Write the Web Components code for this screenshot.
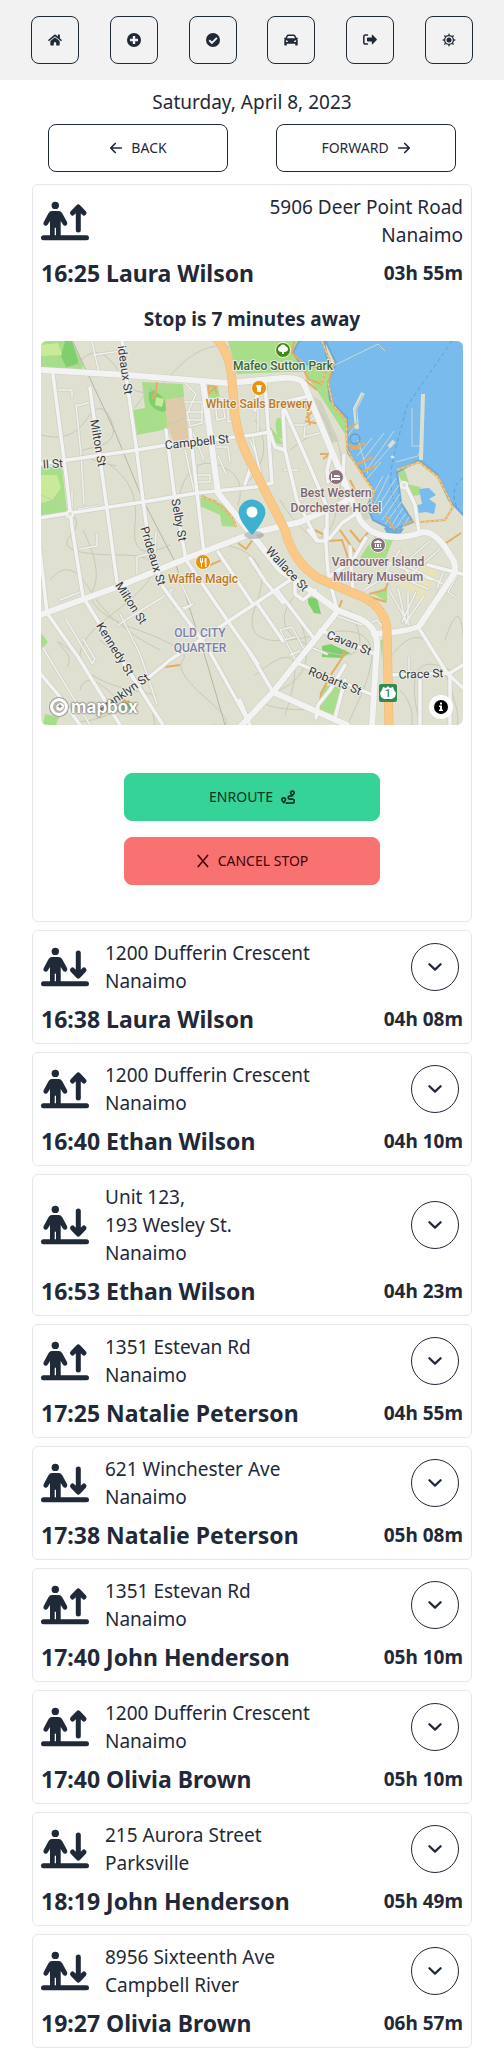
<!DOCTYPE html>
<html lang="en">
<head>
<meta charset="utf-8">
<meta name="viewport" content="width=device-width, initial-scale=1">
<title>Driver schedule</title>
<style>
  body { margin: 0; background: #fff; color: #1f2937; font: 19px/28px "Noto Sans", "Open Sans", sans-serif; }
</style>
</head>
<body>
<schedule-page>
  <app-nav slot="nav"></app-nav>
  <day-switcher slot="day">Saturday, April 8, 2023</day-switcher>
  <stop-card kind="up" time="16:25" name="Laura Wilson" eta="03h 55m" expanded>
    <span slot="address">5906 Deer Point Road<br>Nanaimo</span>
    <stop-detail>Stop is 7 minutes away</stop-detail>
  </stop-card>
  <stop-card kind="down" time="16:38" name="Laura Wilson" eta="04h 08m"><span slot="address">1200 Dufferin Crescent<br>Nanaimo</span></stop-card>
  <stop-card kind="up" time="16:40" name="Ethan Wilson" eta="04h 10m"><span slot="address">1200 Dufferin Crescent<br>Nanaimo</span></stop-card>
  <stop-card kind="down" time="16:53" name="Ethan Wilson" eta="04h 23m"><span slot="address">Unit 123,<br>193 Wesley St.<br>Nanaimo</span></stop-card>
  <stop-card kind="up" time="17:25" name="Natalie Peterson" eta="04h 55m"><span slot="address">1351 Estevan Rd<br>Nanaimo</span></stop-card>
  <stop-card kind="down" time="17:38" name="Natalie Peterson" eta="05h 08m"><span slot="address">621 Winchester Ave<br>Nanaimo</span></stop-card>
  <stop-card kind="up" time="17:40" name="John Henderson" eta="05h 10m"><span slot="address">1351 Estevan Rd<br>Nanaimo</span></stop-card>
  <stop-card kind="up" time="17:40" name="Olivia Brown" eta="05h 10m"><span slot="address">1200 Dufferin Crescent<br>Nanaimo</span></stop-card>
  <stop-card kind="down" time="18:19" name="John Henderson" eta="05h 49m"><span slot="address">215 Aurora Street<br>Parksville</span></stop-card>
  <stop-card kind="down" time="19:27" name="Olivia Brown" eta="06h 57m"><span slot="address">8956 Sixteenth Ave<br>Campbell River</span></stop-card>
</schedule-page>

<script>
const ICONS = {
  home: '<svg viewBox="0 0 576 512" width="14" height="14"><path fill="currentColor" d="M280.37 148.26L96 300.11V464a16 16 0 0 0 16 16l112.06-.29a16 16 0 0 0 15.92-16V368a16 16 0 0 1 16-16h64a16 16 0 0 1 16 16v95.64a16 16 0 0 0 16 16.05L464 480a16 16 0 0 0 16-16V300L295.67 148.26a12.19 12.19 0 0 0-15.3 0zM571.6 251.47L488 182.56V44.05a12 12 0 0 0-12-12h-56a12 12 0 0 0-12 12v72.61L318.47 43a48 48 0 0 0-61 0L4.34 251.47a12 12 0 0 0-1.6 16.9l25.5 31A12 12 0 0 0 45.15 301l235.22-193.74a12.19 12.19 0 0 1 15.3 0L530.9 301a12 12 0 0 0 16.9-1.6l25.5-31a12 12 0 0 0-1.7-16.93z"/></svg>',
  plus: '<svg viewBox="0 0 14 14" width="14" height="14"><path fill="currentColor" fill-rule="evenodd" d="M7 0a7 7 0 1 1 0 14A7 7 0 0 1 7 0zM5.8 3v2.8H3v2.4h2.800V11h2.400V8.200H11V5.800H8.200V3z"/></svg>',
  check: '<svg viewBox="0 0 14 14" width="14" height="14"><circle cx="7" cy="7" r="7" fill="currentColor"/><path fill="none" stroke="#f2f2f2" stroke-width="1.900" d="M3.200 7.200l2.700 2.600 5-5"/></svg>',
  car: '<svg viewBox="0 0 14 14" width="14" height="14"><path fill="currentColor" fill-rule="evenodd" d="M4.300 1.600h5.400q1.300 0 1.800 1.200l.9 2h1.100q.5 0 .4.500l-.2.700q-.1.300-.5.300.5.600.5 1.400v4q0 .9-.9.900h-.7q-.9 0-.9-.9v-.9H2.800v.9q0 .9-.9.900h-.7q-.9 0-.9-.9v-4q0-.8.500-1.400-.4 0-.5-.3L.1 5.300q-.1-.5.4-.5h1.100l.9-2q.5-1.200 1.800-1.200zM4.500 3q-.6 0-.8.600L3 5.300h8l-.7-1.700q-.2-.6-.8-.6zM2.700 7.200a.9.900 0 1 0 0 1.800h1.200q.4-.1.100-.6-.5-.8-1.300-1.200zm8.600 0q-.8.400-1.300 1.200-.3.500.1.600h1.200a.9.900 0 1 0 0-1.800z"/></svg>',
  exit: '<svg viewBox="0 0 14 14" width="14" height="14"><path fill="none" stroke="currentColor" stroke-width="1.500" stroke-linecap="round" d="M4.500 2H2.600Q.8 2 .8 3.800v5.400Q.8 11 2.600 11h1.900"/><path fill="currentColor" d="M4.800 4.500h4V2q0-.8.700-.3l4.200 4.400q.4.400 0 .8L9.500 11.300q-.7.500-.7-.3V8.500h-4q-.8 0-.8-.8V5.300q0-.8.800-.8z"/></svg>',
  sun: '<svg viewBox="0 0 14 14" width="14" height="14"><g fill="currentColor"><circle cx="7" cy="7" r="2.500"/><path d="M7 0l1 2.200H6zM7 14l1-2.200H6zM0 7l2.200 1V6zM14 7l-2.200 1V6zM2 2l2.400.9-1.500 1.500zM12 2l-2.400.9 1.500 1.500zM2 12l2.400-.9-1.500-1.500zM12 12l-2.400-.9 1.500-1.500z"/></g><circle cx="7" cy="7" r="4.400" fill="none" stroke="currentColor" stroke-width="1.300"/></svg>',
  left: '<svg viewBox="0 0 14 14" width="14" height="14"><path fill="none" stroke="currentColor" stroke-width="1.700" stroke-linecap="round" stroke-linejoin="round" d="M12.200 7H1.800M6.200 2.500L1.700 7l4.500 4.500"/></svg>',
  right: '<svg viewBox="0 0 14 14" width="14" height="14"><path fill="none" stroke="currentColor" stroke-width="1.700" stroke-linecap="round" stroke-linejoin="round" d="M1.800 7h10.400M7.800 2.500L12.300 7l-4.500 4.500"/></svg>',
  route: '<svg viewBox="0 0 14 14" width="14" height="14"><g fill="none" stroke="currentColor" stroke-width="1.700" stroke-linecap="round" stroke-linejoin="round"><path d="M11.300 5.600Q9.500 3.700 9.500 2.600a1.900 1.900 0 0 1 3.700 0q0 1.100-1.900 3zM2.700 12.600Q.9 10.800.9 9.600a1.800 1.800 0 0 1 3.600 0q0 1.200-1.800 3z"/><path d="M10.700 6H8.800a1.600 1.600 0 0 0 0 3.200h2.600a1.900 1.900 0 0 1 0 3.900H5.300"/></g></svg>',
  cross: '<svg viewBox="0 0 14 14" width="14" height="14"><path fill="none" stroke="currentColor" stroke-width="1.600" stroke-linecap="round" d="M2.200 1.400l9.400 11.200M11.600 1.400L2.200 12.600"/></svg>',
  chevron: '<svg viewBox="0 0 14 14" width="14" height="14"><path fill="none" stroke="currentColor" stroke-width="2.200" stroke-linecap="round" stroke-linejoin="round" d="M1.400 4.200L7 9.600l5.600-5.400"/></svg>'
};
const rider = arrow => `<svg viewBox="0 0 48 40" width="48" height="40" aria-hidden="true"><circle cx="14.300" cy="4.400" r="3.700" fill="currentColor"/><path fill="currentColor" d="M11 10h6.600q2.300 0 3.800 2.400l4.600 8.600q1 2.400-.8 3.400-2 .8-3.300-1l-2.200-3.400V35h-4.700v-8.200h-1.300V35H9V20l-2.200 3.400q-1.300 1.800-3.100 1-2-1-.9-3.400l4.500-8.600Q8.700 10 11 10z"/><g fill="none" stroke="currentColor" stroke-width="5" stroke-linecap="round" stroke-linejoin="round"><path d="M2.500 36.700h43"/><path d="${arrow === 'up' ? 'M37.300 29V7M31.500 12L37.300 6l5.700 6' : 'M37.300 6v22M31.500 23l5.800 6 5.700-6'}"/></g></svg>`;

function define(name, render) {
  customElements.define(name, class extends HTMLElement {
    constructor() {
      super();
      this.attachShadow({ mode: 'open' });
    }
    connectedCallback() {
      const t = document.createElement('template');
      t.innerHTML = render(this);
      this.shadowRoot.replaceChildren(t.content.cloneNode(true));
    }
  });
}

define('schedule-page', () => `
  <style>
    :host { display: block; }
    main { display: flex; flex-direction: column; gap: 8px; padding: 12px 32px 4px; }
  </style>
  <slot name="nav"></slot>
  <slot name="day"></slot>
  <main><slot></slot></main>`);

define('app-nav', () => `
  <style>
    :host { display: block; background: #f2f2f2; }
    nav { display: flex; justify-content: space-evenly; padding: 16px 0; }
  </style>
  <nav aria-label="Main">
    ${[['home', 'Home'], ['plus', 'Add'], ['check', 'Completed'], ['car', 'Vehicle'], ['exit', 'Sign out'], ['sun', 'Theme']]
      .map(([icon, label]) => `<ui-button icon="${icon}" label="${label}" variant="square"></ui-button>`).join('')}
  </nav>`);

define('ui-button', el => {
  const icon = el.getAttribute('icon'), label = el.getAttribute('label');
  const text = el.textContent.trim() ? '<span><slot></slot></span>' : '';
  const order = el.hasAttribute('trailing') ? text + ICONS[icon] : ICONS[icon] + text;
  return `
  <style>
    :host { display: block; }
    :host([variant="square"]), :host([variant="round"]) { width: 48px; }
    button { box-sizing: border-box; width: 100%; height: 48px; padding: 0; display: flex; align-items: center; justify-content: center; gap: 8px;
      border: 1px solid #1f2937; border-radius: 8px; background: transparent; color: #1f2937; font: 14px/20px "Noto Sans", "Open Sans", sans-serif; cursor: pointer; }
    :host([variant="round"]) button { border-radius: 50%; }
    :host([variant="success"]) button { border-color: #36d399; background: #36d399; color: #003320; }
    :host([variant="error"]) button { border-color: #f87272; background: #f87272; color: #470000; }
    svg { flex: none; }
  </style>
  <button type="button" ${label ? `aria-label="${label}"` : ''}>${order}</button>`;
});

define('day-switcher', () => `
  <style>
    :host { display: block; padding-top: 8px; text-align: center; }
    h1 { margin: 0; font: inherit; }
    div { display: flex; justify-content: space-evenly; padding-top: 8px; }
    ui-button { flex: 0 1 180px; }
  </style>
  <h1><slot></slot></h1>
  <div><ui-button icon="left">BACK</ui-button><ui-button icon="right" trailing>FORWARD</ui-button></div>`);

define('stop-card', el => {
  const a = n => el.getAttribute(n), open = el.hasAttribute('expanded');
  return `
  <style>
    :host { display: block; padding: 8px; border: 1px solid #e5e7eb; border-radius: 6px; }
    .top { display: flex; align-items: center; gap: 16px; }
    .top svg { flex: none; }
    address { flex: 1; font-style: normal; }
    :host([expanded]) address { text-align: right; }
    ui-button { margin-right: 4px; }
    .rider { display: flex; align-items: center; justify-content: space-between; padding-top: 8px; font-weight: 700; }
    h2 { margin: 0; font-size: 23px; line-height: 32px; }
  </style>
  <div class="top">${rider(a('kind'))}<address><slot name="address"></slot></address>${open ? '' : '<ui-button variant="round" icon="chevron" label="Show stop"></ui-button>'}</div>
  <div class="rider"><h2>${a('time')} ${a('name')}</h2><span>${a('eta')}</span></div>
  <slot></slot>`;
});

define('stop-detail', () => `
  <style>
    :host { display: block; padding: 16px 0 28px; }
    h3 { margin: 0 0 8px; text-align: center; font-size: 19px; line-height: 28px; font-weight: 700; }
    .actions { display: flex; flex-direction: column; align-items: center; gap: 16px; padding-top: 48px; }
    ui-button { width: 256px; max-width: 100%; }
  </style>
  <h3><slot></slot></h3>
  <street-map></street-map>
  <div class="actions"><ui-button variant="success" icon="route" trailing>ENROUTE</ui-button><ui-button variant="error" icon="cross">CANCEL STOP</ui-button></div>`);

const STREETS = [
  'M53 375L67 483 72 527 83 597 130 673 163 725', 'M40 550L47 613 78 657 120 725', 'M40 673L60 697 80 725',
  'M90 388L96 432 103 480 117 582', 'M122 340L127 383 137 453 143 500 149 545 163 587 207 647 242 710 250 725',
  'M166 430L175 500 186 560 227 620 258 664', 'M40 464L67 460 137 450 167 445 253 435 270 432', 'M40 518L70 513 143 502 197 493 255 487 272 483 265 383',
  'M125 694L137 687 170 660 253 605 293 578', 'M190 429L197 493 204 553', 'M218 552L252 603', 'M250 558L265 581 283 603', 'M257 603L283 641', 'M277 590L313 637', 'M295 582V594L303 600 315 590',
  'M250 653L273 692', 'M320 630L377 655', 'M297 663L373 695', 'M345 665L330 690 318 705 316 718', 'M345 680L335 718', 'M388 675L450 673 463 665', 'M420 630L447 673 463 688',
  'M450 673V725', 'M420 676V725', 'M325 530L328 573 337 610', 'M270 433L275 447 285 450', 'M283 412L285 450 297 500 317 540', 'M283 410L288 401 305 397', 'M285 410L307 460 327 507 327 540',
  'M332 450L327 470 328 482', 'M330 538L342 523 357 513', 'M247 455L250 470 245 484', 'M308 530L317 541 326 541', 'M343 485L344 455', 'M330 576L353 560 366 538', 'M350 547L353 590', 'M428 565L462 574', 'M406 486L415 505 419 532',
  'M258 390L255 410M250 725L240 700'
];
const LANES = [
  'M58 390h14v8M76 406l15-4M76 404l5 50 3 50M93 355l28-4M99 372L95 355 92 341M98 506l-20 3M80 549l17-3v-12M72 530v-40M60 600l20-8',
  'M43 648L90 725M92 663l-12-20-14-24M92 664l3-5-12-20M117 626l10-7 36-22 10-8M120 614l20 40 17 50M137 574v-17l18-5 1-20M170 590l6 20 15-5-10-22-10-3M173 602l7 10 13-8',
  'M184 382l12 12-8 18h15M185 402h17M187 412l3 14 12-3v-20M192 430l12 30M187 420h15M185 450l10 45M196 482h14v-7h-14v-10M215 400l7-2 3 20-8 2zM228 405l4 0 2 15-6 2zM216 447h12l2 15M218 456l8 18',
  'M250 440l6 15 4 20M252 435l9 40M305 427l-1 10 16-4M288 425h17l10-8M258 390v42M298 470h-14M303 500l-6-2M330 452l10 30',
  'M280 630l12-3 13 24-10 8zM283 640l12-3M290 655l10-4M310 647l17 7M333 615l15 5 14 5M365 625l12-5 8 10-5 10M382 560l50 20M388 572l40 17M395 560l50 25M400 550l-20 30-16 10M389 590l20 35M398 588l8 36M408 590v32M416 592l-14 30M424 596l-18 26M440 590l-14 24M445 568l-8 20M409 657v15',
  'M393 457l-1 0M455 597l-7-5 10-18M430 541l-28 24 8 10 30-26'
];
const CONTOURS = [
  'M41 362q20 18 40-2t40 15 50 0 60-28M41 435q30 8 45-15t25 0-20 28 25 18M110 465q30 20 25 60t35 20M83 530q20 40 10 60t45 40 45 30 25 40 5 25M135 408q25-40 45-10t-30 25M178 500q10-45 40-35t20 40',
  'M41 495q50 20 30 40t50 20-10 60 45 80M50 580q20-25 40 10t70 60M70 650q-20-15-8-3t5 20M80 690q5-20 30 2t-30 30M100 640q50 40 55 85M226 545q50 10 30 60t60 30 45 60-20 28M255 675q60-50 30 40M295 610q30 60-15 80t40 20',
  'M290 450q60-50 50 40t-60 10M310 400q30 30 20 60M255 420q20 30-5 60M300 590q-40 40 20 60t30-40M392 655q30-40 50 10t15 60M420 725q-20-80 30-55M400 690q15 15 12 35M445 640q15-45 18-5'
];
const LABELS = [
  ['ideaux St', 125, 370, 82], ['Milton St', 98, 443, 80], ['ll St', 53, 464, -4], ['Campbell St', 197, 442, -6], ['Selby St', 179, 520, 80], ['Prideaux St', 153, 556, 73],
  ['Milton St', 131, 603, 57], ['Kennedy St', 115, 649, 58], ['Franklyn St', 124, 693, -35], ['Wallace St', 287, 569, 47], ['Cavan St', 349, 643, 22], ['Robarts St', 335, 681, 22], ['Crace St', 421, 674, -2],
  ['Mafeo Sutton Park', 283, 366, 0, '#38682b'], ['White Sails Brewery', 259, 404, 0, '#bd7a1d'], ['Waffle Magic', 203, 579, 0, '#bd7a1d'],
  ['Best Western', 336, 493, 0, '#7d6470'], ['Dorchester Hotel', 336, 508, 0, '#7d6470'], ['Vancouver Island', 378, 562, 0, '#7d6470'], ['Military Museum', 378, 577, 0, '#7d6470'],
  ['OLD CITY', 200, 633, 0, '#7a80aa'], ['QUARTER', 200, 648, 0, '#7a80aa']
];
const ROADS = {
  top: 'M40 370L127 375 228 383 250 381 283 378Q300 377 304 384L330 447 346 485 360 520Q368 531 378 534 397 541 423 532 437 532 450 555 457 563 454 574L420 625Q418 629 388 633L374 634',
  wallace: 'M203 383L211 440 218 493 240 520 253 536 280 570 310 590 337 610 360 619Q377 627 377 645L372 725',
  diagonal: 'M40 615L117 587 190 557 253 533 300 522 343 503 350 498',
  south: 'M337 612L273 692 240 727',
  lower: 'M273 692L347 725'
};
const HIGHWAY = 'M216 338Q227 350 231 370L235 415Q238 440 253 467L285 530Q293 562 318 578L353 593Q385 604 387 630L389 728';
const paths = (list, attrs) => `<g fill="none" stroke-linejoin="round" stroke-linecap="round" ${attrs}>${list.map(d => `<path d="${d}"/>`).join('')}</g>`;

define('street-map', () => `
  <style>
    :host { display: block; position: relative; overflow: hidden; border-radius: 6px; }
    .map { display: block; width: 100%; height: 384px; }
    text { font-family: Roboto, "Liberation Sans", sans-serif; font-size: 12px; font-weight: 500; text-anchor: middle; dominant-baseline: central; paint-order: stroke; stroke: #eeeee6; stroke-width: 2px; stroke-linejoin: round; }
    text.street { font-weight: 400; }
    .logo { position: absolute; left: 8px; bottom: 6px; display: flex; align-items: center; gap: 2px; height: 24px; color: #fff; text-decoration: none;
      font: 700 17px/24px Inter, sans-serif; text-shadow: 0 0 2px #777, 0 0 2px #777, 0 0 2px #888; }
    button { position: absolute; right: 10px; bottom: 6px; width: 24px; height: 24px; padding: 0; border: 0; border-radius: 50%; background: #fff; }
    button svg, .logo svg { display: block; }
    button svg { margin: auto; }
  </style>
  <svg class="map" viewBox="41 341 422 384" preserveAspectRatio="xMidYMid slice" role="img" aria-label="Map of Nanaimo">
    <path fill="#dfe0d0" d="M0 300h504v460H0z"/>
    <g fill="#a8de89">
      <path d="M41 341h31l11 24-1 7-41-5zM142 382l41 2 1 13-19 3 3 29-31 6-4-25 12-2zM41 467h21l5 45-26 3zM201 494l26 13 10 20-15-1-2-11-20-9zM205 384l13 3 2 12-14-2z"/>
      <path d="M228 341h72l-6 12 8 9 31 2-5 22 19 33v18l-31-48-12-17h-22l-45 2zM268 424q10 12 17 19v-25h-8q-5 12 7 27-13-1-20-13z"/>
      <path d="M365 550l12-17 16 7-8 20-25-2zM372 593l15-6v15zM324 685l19 3-11 29-15-8zM41 633l7 9-7 8zM45 714l14 3-3 8H43zM380 640h3l-1 20zM397 470l7-2 5 15-8-3zM407 484l13 3 0 8-7 1z"/>
      <path fill="#7fcf6d" d="M65 341h7l7 23-13 3-5-11zM150 388q25 15 14 24-20-4-14-24zM308 597l9 1 4 16-7-1-6-10zM322 646l9-2 19 9-8 5-20-1zM119 705l10-5 2 8-8 3z"/>
    </g>
    <path fill="#c9ea9a" d="M41 345l17-2 4 12-21 1zM41 475l16 0 4 13-9 12-11 3zM156 397l8 2-2 8-7-2z"/>
    <path fill="#dfcba9" d="M165 400l19-3 5 43-16 1-5-13z"/>
    <path fill="#e9e3bd" d="M410 560l25 3 2 10-13 29-27-19z"/>
    <path fill="#d2d2c1" d="M308 393l13 8 18 40-8 2zM345 505l20 2 5 12-12 2z"/>
    <path fill="#79bbec" stroke="#6fa9d4" stroke-width="2" d="M300 340l-7 12 6 10 20 6 9-5-4-23zM325 340l11 23-8 20 2 17 17 18 1 35 14 18 12 20-7 16 6 13 20 10 20-8-12-19-4-31 22-12 18 14 12 26 16 17V340zM385 528q10 6 18 0l-3 5h-12z"/>
    <path fill="#79bbec" d="M419 489l10-1 7 7-7 4 7 5-2 10-8-2-7 1-6-7 9-2z"/>
    <path fill="none" stroke="#5e9edb" stroke-dasharray="4 3" d="M452 341l-45 65-12 45q-8 30-1 50l8 20M463 478q-15 10-5 32"/>
    <g fill="none" stroke="#c9d8d5" stroke-width="1">
      <path d="M333 366l45-22 7 7M412 408v38h8M396 462l22-6 4-9M357 456l15-18M360 464l24-31M365 472l29-41M370 470l22-25M366 480l15-18M370 500l13-24M374 505l15-30M376 510l20-32M379 515l20-30M382 520l18-26M385 524l18-24M390 528l13-20M396 528l10-15M402 529l7-12M358 440l10 34M345 440l14-20"/>
      <path stroke="#dde0d0" stroke-width="4" d="M423 394l-2 66M363 393l-8 16 2 20M389 447l5-6"/><path stroke="#8dbfe2" d="M363 395l-7 14 1 15"/>
      <circle cx="355" cy="439" r="5" stroke="#718fa4"/>
    </g>
    ${paths(CONTOURS, 'stroke="#c8c8b8" stroke-width="1"')}
    <path fill="none" stroke="#b4b5a4" stroke-width="1" d="M72 340L115 432 143 500 175 562 207 663 225 725"/>
    ${paths(LANES, 'stroke="#cecfc3" stroke-width="3"')}
    ${paths(LANES, 'stroke="#f1f1ee" stroke-width="1.500"')}
    <path fill="none" stroke="#e5ad62" stroke-width="2" d="M157 382l-1 10-4 7M207 395l9-8-7-2zM213 385l4 8M201 497l14 4 18 17 3 9M238 543l8 6 8-11M305 400l5 25M306 418l8-8M305 421l15 3M320 454l10 0-7 5M334 362l-6 22M322 341l8 20-9 23-13-5-7-16M294 341l-2 12 10 9M305 380l12 10M328 383l5 22 13 15 1 30 15 24 12 17-5 20M346 430l10-6M348 445l12 4M350 450l15-7M355 465l18-8M362 472l14-6M397 470l22-8 19 15 15 30-8 13-25 2M403 525l10-4M328 541l14-1 6 18M340 530l15 22M315 530l15 8M350 530l10 12 10-12M342 600l-3 8M369 594l16-4 3-7M367 596l19 6M345 650l-3 8-10 15-11 20-2 20M210 565l12-5-3-3M118 712l6-12 8 5M443 545l18-12M180 665l-15 2M350 480l5 10 5 0M385 515l10 15"/>
    <path fill="none" stroke="#f1d7a8" stroke-width="1" stroke-dasharray="3 2" d="M322 341l8 20-9 23M328 383l5 22 13 15 1 30 15 24 12 17-5 20M397 470l22-8 19 15 15 30-8 13-25 2M201 497l14 4 18 17 3 9"/>
    ${paths(STREETS, 'stroke="#cfd0c6" stroke-width="5"')}
    ${paths(Object.values(ROADS), 'stroke="#cfd0c6" stroke-width="7"')}
    ${paths(STREETS, 'stroke="#f3f3f3" stroke-width="3.500"')}
    ${paths(Object.values(ROADS), 'stroke="#f3f3f3" stroke-width="6"')}
    <circle cx="70" cy="514" r="3" fill="#dfe0d0" stroke="#f3f3f3" stroke-width="2"/><circle cx="404" cy="485" r="3" fill="#dfe0d0" stroke="#f3f3f3" stroke-width="2"/>
    <path fill="none" stroke="#eeb877" stroke-width="9" d="${HIGHWAY}"/><path fill="none" stroke="#fac987" stroke-width="8" d="${HIGHWAY}"/>
    <g>${LABELS.map(([t, x, y, r, c]) => `<text x="${x}" y="${y}" fill="${c || '#36383f'}" ${r ? `class="street" transform="rotate(${r} ${x} ${y})"` : ''}>${t}</text>`).join('')}</g>
    <g stroke="#f5f0e8" stroke-width="1">
      <circle cx="283" cy="350" r="7.500" fill="#3f8a10"/><circle cx="259" cy="388" r="7.500" fill="#e8930f"/><circle cx="203" cy="562" r="7.500" fill="#e8930f"/><circle cx="336" cy="477" r="7.500" fill="#8b717e"/><circle cx="378" cy="545" r="7.500" fill="#8b717e"/>
    </g>
    <g fill="#fff">
      <path d="M282 354v-2q-4 0-4-3 0-2 2-2.500 1-2 3-2t3 2q2 .5 2 2.500 0 3-4 3v2zM256 385h6l-1 3v4h-4v-4zM200 558v4l1 1v4h1v-4l1-1v-4h-1v3h-1v-3zM205 558q-1 4 0 5v4h1.500v-9zM331 474h1v4h8v-2l-2-1h-4v2h6v3h-8v1h-1zM374 542l4-2 4 2v1h-8zM374 548h8v1h-8zM375 544h1v3h-1zM377 544h2v3h-2zM380 544h1v3h-1z"/>
      <rect x="379" y="684" width="18" height="18" rx="2" fill="#318b51"/><path d="M388 686l2 2 3-1 1 3 2 3-1 4-3 2-4 0-4 0-3-2-1-4 2-3 1-3 3 1z"/>
    </g>
    <text x="388" y="693" fill="#318b51" style="font-size:11px;stroke:none">1</text>
    <ellipse cx="254" cy="535" rx="10" ry="4" fill="#65716b" opacity=".35"/>
    <path fill="#3fb1ce" d="M252 535Q240 522 238.500 513a13.500 13.500 0 1 1 27 0Q264 522 252 535z"/><circle cx="252" cy="512" r="5.500" fill="#fff"/>
  </svg>
  <a class="logo" href="#mapbox"><svg viewBox="0 0 20 20" width="20" height="20" aria-hidden="true"><circle cx="10" cy="10" r="9" fill="#aaaba2" fill-opacity=".8" stroke="#999" stroke-width="2"/><circle cx="10" cy="10" r="7.500" fill="none" stroke="#fff" stroke-width="3"/><path d="M8 13q-2-4 1-6t5 0 0 5-6 1z" fill="#fff"/><path d="M11 6.500l.8 2 2 .8-2 .8-.8 2-.8-2-2-.8 2-.8z" fill="#888"/></svg><span>mapbox</span></a>
  <button type="button" aria-label="Map attribution"><svg viewBox="0 0 14 14" width="14" height="14"><circle cx="7" cy="7" r="7"/><path fill="#fff" d="M6 2.500h2v2H6zM5 5.500h3v4h1V11H5V9.500h1V7H5z"/></svg></button>`);
</script>
</body>
</html>
